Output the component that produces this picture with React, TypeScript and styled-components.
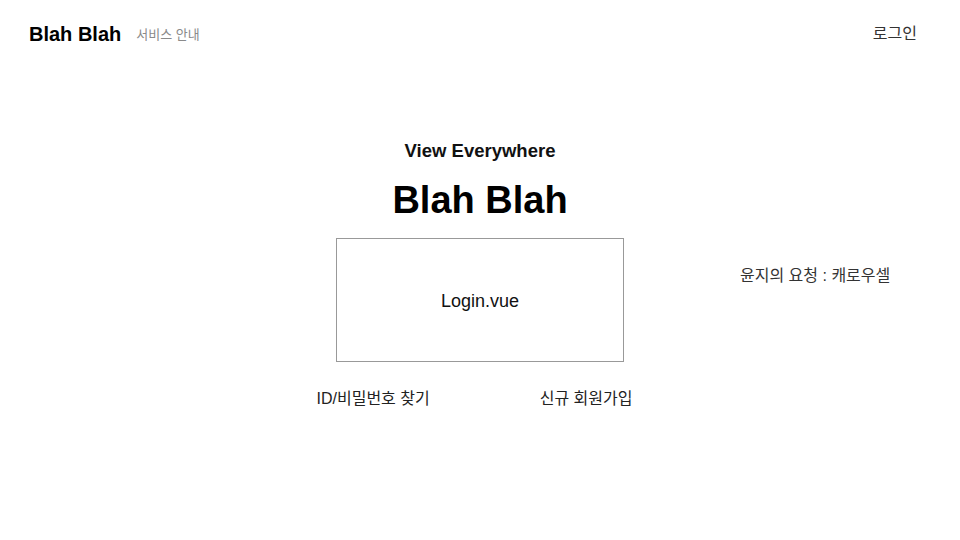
import React from "react";
import styled, { createGlobalStyle } from "styled-components";

const Global = createGlobalStyle`
  html, body { margin: 0; padding: 0; background: #ffffff; }
  body { font-family: "Liberation Sans", Arial, "Noto Sans CJK KR", sans-serif; color: #111; }
`;

const Page = styled.div`
  width: 960px;
  height: 540px;
  display: flex;
  flex-direction: column;
  overflow: hidden;
`;

const Header = styled.header`
  display: flex;
  align-items: center;
  padding: 24px 43px 0 29px;
  height: 20px;
`;

const Logo = styled.div`
  font-size: 20px;
  line-height: 20px;
  font-weight: 700;
  color: #000;
`;

const NavLink = styled.span`
  margin-left: 15px;
  font-size: 13px;
  line-height: 13px;
  color: #8a8a8a;
`;

const LoginLink = styled.span`
  margin-left: auto;
  font-size: 16px;
  line-height: 16px;
  color: #333;
`;

const Main = styled.main`
  display: flex;
  flex-direction: column;
  align-items: center;
  padding-top: 98px;
`;

const Tagline = styled.h2`
  margin: 0;
  font-size: 18.5px;
  line-height: 18.5px;
  font-weight: 700;
  color: #111;
`;

const Title = styled.h1`
  margin: 20px 0 0;
  font-size: 38px;
  line-height: 38px;
  font-weight: 700;
  color: #000;
`;

const Stage = styled.div`
  margin-top: 19px;
  width: 100%;
  display: grid;
  grid-template-columns: 1fr 288px 1fr;
`;

const LoginBox = styled.div`
  grid-column: 2;
  box-sizing: border-box;
  height: 124px;
  padding-top: 4px;
  border: 1px solid #999;
  display: flex;
  align-items: center;
  justify-content: center;
  font-size: 18px;
  color: #111;
`;

const SideNote = styled.div`
  grid-column: 3;
  align-self: start;
  margin: 30px 0 0 116px;
  font-size: 16px;
  line-height: 16px;
  color: #333;
  white-space: nowrap;
`;

const Links = styled.nav`
  margin-top: 29px;
  display: flex;
  gap: 110px;
  padding-right: 11px;
`;

const TextLink = styled.span`
  font-size: 16px;
  line-height: 16px;
  color: #222;
`;

export default function App() {
  return (
    <>
      <Global />
      <Page>
        <Header>
          <Logo>Blah Blah</Logo>
          <NavLink>서비스 안내</NavLink>
          <LoginLink>로그인</LoginLink>
        </Header>
        <Main>
          <Tagline>View Everywhere</Tagline>
          <Title>Blah Blah</Title>
          <Stage>
            <LoginBox>Login.vue</LoginBox>
            <SideNote>윤지의 요청 : 캐로우셀</SideNote>
          </Stage>
          <Links>
            <TextLink>ID/비밀번호 찾기</TextLink>
            <TextLink>신규 회원가입</TextLink>
          </Links>
        </Main>
      </Page>
    </>
  );
}
